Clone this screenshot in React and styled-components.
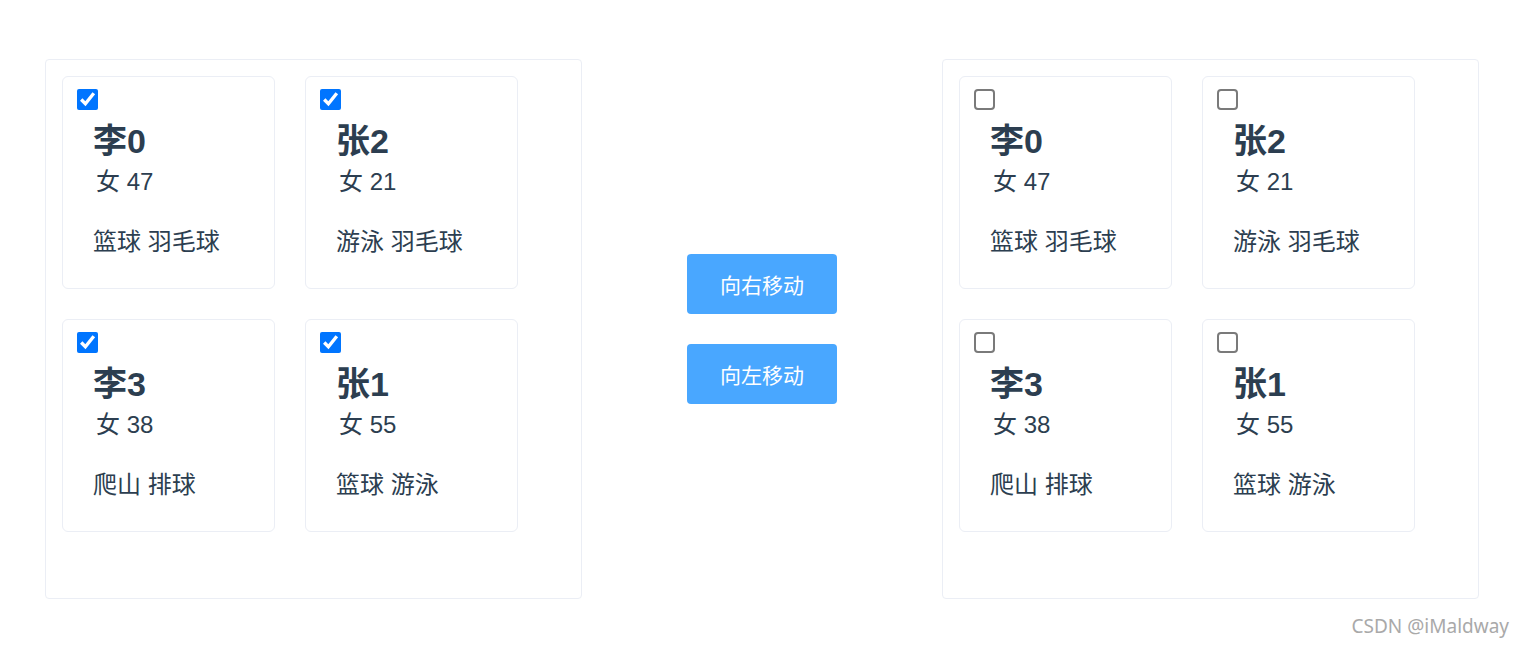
import React, { useState } from 'react';
import styled, { createGlobalStyle } from 'styled-components';

const people = [
    { id: 'l0', name: '李0', sex: '女', age: 47, hobbies: '篮球 羽毛球' },
    { id: 'z2', name: '张2', sex: '女', age: 21, hobbies: '游泳 羽毛球' },
    { id: 'l3', name: '李3', sex: '女', age: 38, hobbies: '爬山 排球' },
    { id: 'z1', name: '张1', sex: '女', age: 55, hobbies: '篮球 游泳' },
];

const GlobalStyle = createGlobalStyle`
    html, body {
        margin: 0;
        padding: 0;
        background: #fff;
    }
    body {
        font-family: "Liberation Sans", Arial, "Noto Sans CJK SC", sans-serif;
        color: #2c3e50;
    }
`;

const PersonCard = ({ person, checked, onToggle }) => (
    <Card>
        <Check type="checkbox" checked={checked} onChange={onToggle} />
        <Info>
            <Name>{person.name}</Name>
            <Age>
                {person.sex} {person.age}
            </Age>
            <Hobbies>{person.hobbies}</Hobbies>
        </Info>
    </Card>
);

const Panel = ({ checkedAll }) => {
    const [checked, setChecked] = useState(() =>
        Object.fromEntries(people.map((p) => [p.id, checkedAll]))
    );
    return (
        <Box>
            {people.map((p) => (
                <PersonCard
                    key={p.id}
                    person={p}
                    checked={checked[p.id]}
                    onToggle={() => setChecked({ ...checked, [p.id]: !checked[p.id] })}
                />
            ))}
        </Box>
    );
};

export default function App() {
    return (
        <Page>
            <GlobalStyle />
            <Panel checkedAll />
            <Actions>
                <MoveButton>向右移动</MoveButton>
                <MoveButton>向左移动</MoveButton>
            </Actions>
            <Panel checkedAll={false} />
            <Watermark>CSDN @iMaldway</Watermark>
        </Page>
    );
}

const Page = styled.div`
    position: relative;
    height: 649px;
    display: flex;
    align-items: center;
    gap: 105px;
    padding: 59px 0 50px 45px;
    box-sizing: border-box;
`;

const Box = styled.div`
    flex: none;
    width: 537px;
    height: 540px;
    box-sizing: border-box;
    border: 1px solid #ebeef5;
    border-radius: 4px;
    padding: 16px;
    display: flex;
    flex-wrap: wrap;
    align-content: flex-start;
    gap: 30px;
`;

const Card = styled.div`
    width: 213px;
    height: 213px;
    box-sizing: border-box;
    border: 1px solid #ebeef5;
    border-radius: 6px;
    padding: 12px 14px;
`;

const Check = styled.input`
    display: block;
    width: 21px;
    height: 21px;
    margin: 0;
    accent-color: #0075ff;

    &:not(:checked) {
        appearance: none;
        box-sizing: border-box;
        border: 2px solid #7a7a7a;
        border-radius: 4px;
        background: #fff;
    }
`;

const Info = styled.div`
    padding-left: 16px;
`;

const Name = styled.div`
    margin-top: 12px;
    font-size: 34px;
    font-weight: bold;
    line-height: 38px;
`;

const Age = styled.div`
    margin-top: 8px;
    padding-left: 3px;
    font-size: 24px;
    line-height: 28px;
`;

const Hobbies = styled.div`
    margin-top: 32px;
    font-size: 24px;
    line-height: 28px;
`;

const Actions = styled.div`
    flex: none;
    display: flex;
    flex-direction: column;
    gap: 30px;
`;

const MoveButton = styled.button`
    width: 150px;
    height: 60px;
    border: none;
    border-radius: 4px;
    background: #49a7ff;
    color: #fff;
    font-family: inherit;
    font-size: 21px;
    cursor: pointer;
`;

const Watermark = styled.div`
    position: absolute;
    right: 16px;
    bottom: 10px;
    font-family: "Noto Sans", "Open Sans", sans-serif;
    font-size: 19px;
    color: #a9a9a9;
`;
